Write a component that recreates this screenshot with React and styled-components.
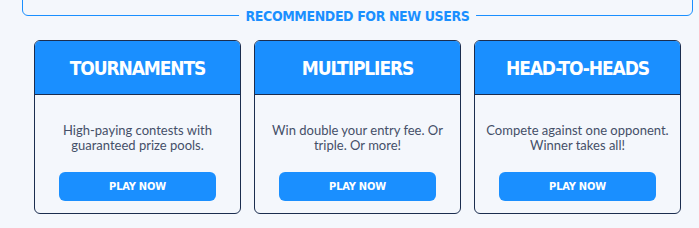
import React from 'react'
import styled, { createGlobalStyle } from 'styled-components'

const GlobalStyle = createGlobalStyle`
  body {
    margin: 0;
    background: #f4f7fc;
    font-family: Lato, "Liberation Sans", sans-serif;
  }
`

const Page = styled.div`
  width: 699px;
  height: 228px;
  overflow: hidden;
  background: #f4f7fc;
`

const Frame = styled.div`
  position: relative;
  height: 24px;
  margin: -10px 6px 0 22px;
  border: 1px solid #1a8fff;
  border-radius: 0 0 6px 6px;
`

const FrameTitle = styled.h2`
  position: absolute;
  left: 50%;
  bottom: -9px;
  transform: translateX(-50%);
  margin: 0;
  padding: 0 7px;
  background: #f4f7fc;
  color: #1a8fff;
  font-family: "DejaVu Sans Condensed", sans-serif;
  font-weight: 700;
  font-size: 14px;
  line-height: 16px;
  letter-spacing: -0.4px;
  white-space: nowrap;
`

const CardRow = styled.div`
  display: flex;
  gap: 13px;
  padding: 24px 0 0 34px;
`

const Card = styled.div`
  width: 205px;
  height: 172px;
  border: 1px solid #1b2d4f;
  border-radius: 6px;
  overflow: hidden;
  display: flex;
  flex-direction: column;
`

const CardHeader = styled.div`
  height: 53px;
  background: #1a8fff;
  border-bottom: 1px solid #1b2d4f;
  display: flex;
  align-items: center;
  justify-content: center;
  color: #ffffff;
  font-family: "DejaVu Sans Condensed", sans-serif;
  font-weight: 700;
  font-size: 19px;
  letter-spacing: -1.1px;
`

const CardBody = styled.div`
  flex: 1;
  display: flex;
  flex-direction: column;
  align-items: center;
  padding: 28px 6px 0;
`

const Text = styled.p`
  margin: 0;
  height: 30px;
  text-align: center;
  color: #454f68;
  font-size: 13px;
  line-height: 14.5px;
`

const PlayButton = styled.button`
  margin-top: 19px;
  width: 157px;
  height: 29px;
  border: none;
  border-radius: 6px;
  background: #1a8fff;
  color: #ffffff;
  font-family: "DejaVu Sans Condensed", sans-serif;
  font-weight: 700;
  font-size: 11px;
  letter-spacing: -0.2px;
  cursor: pointer;
`

const games = [
  { title: 'TOURNAMENTS', text: 'High-paying contests with guaranteed prize pools.' },
  { title: 'MULTIPLIERS', text: 'Win double your entry fee. Or triple. Or more!' },
  { title: 'HEAD-TO-HEADS', text: 'Compete against one opponent. Winner takes all!' },
]

const App = () => (
  <Page>
    <GlobalStyle />
    <Frame>
      <FrameTitle>RECOMMENDED FOR NEW USERS</FrameTitle>
    </Frame>
    <CardRow>
      {games.map(g => (
        <Card key={g.title}>
          <CardHeader>{g.title}</CardHeader>
          <CardBody>
            <Text>{g.text}</Text>
            <PlayButton>PLAY NOW</PlayButton>
          </CardBody>
        </Card>
      ))}
    </CardRow>
  </Page>
)

export default App
